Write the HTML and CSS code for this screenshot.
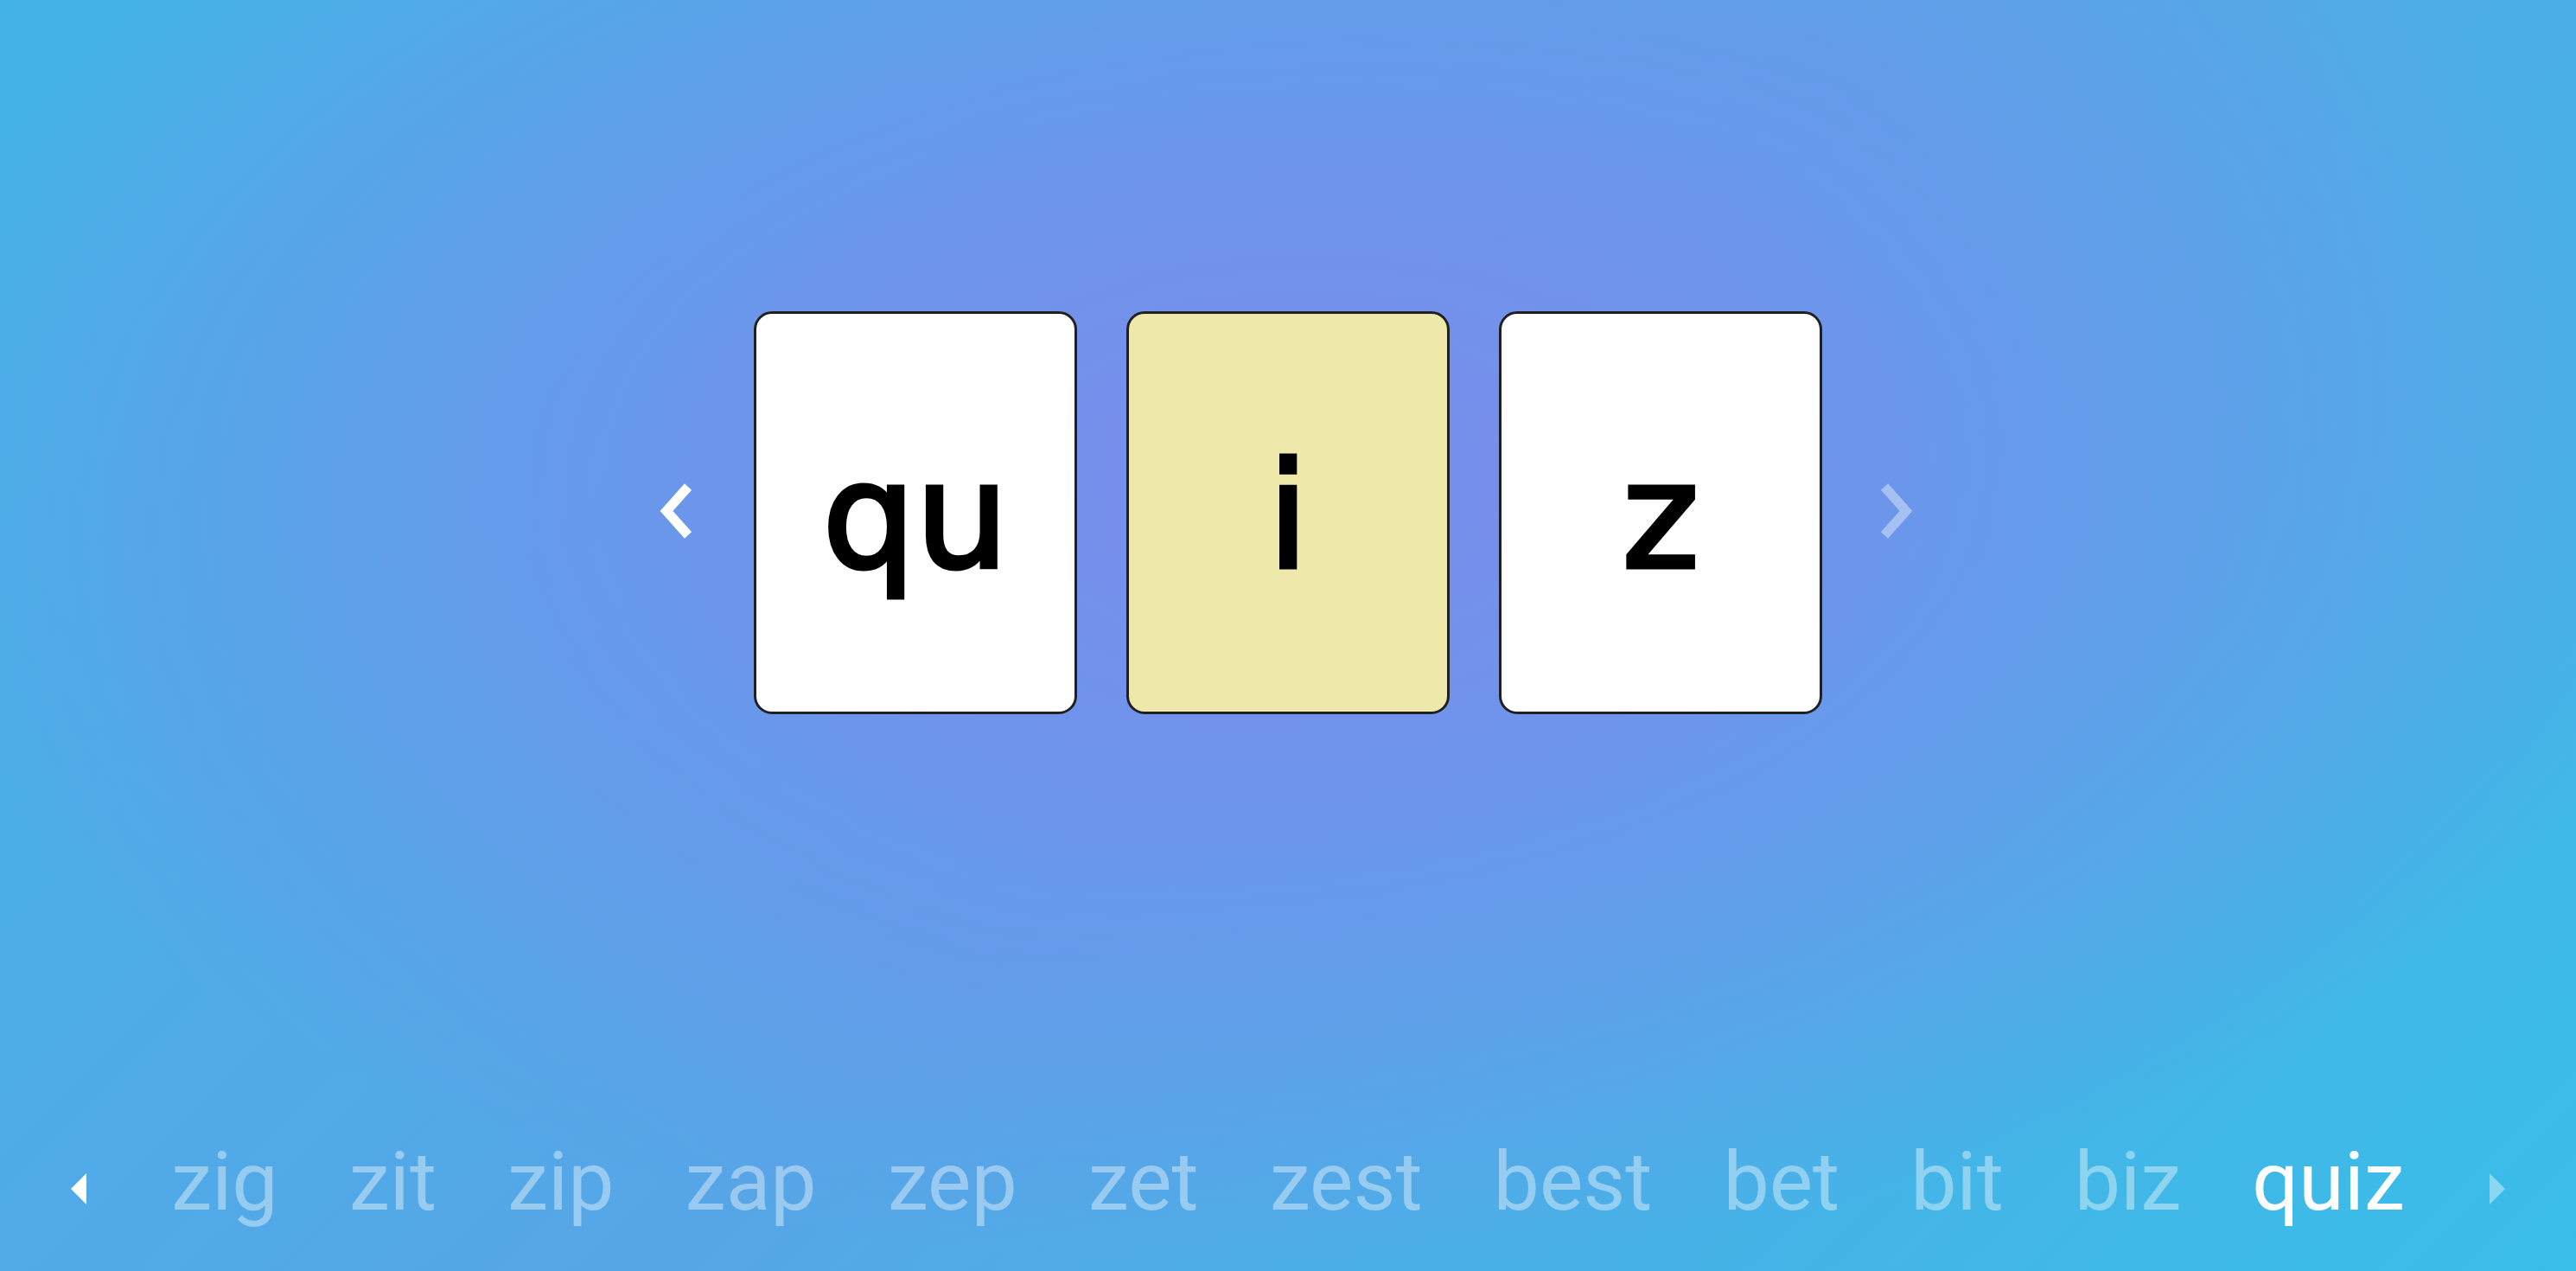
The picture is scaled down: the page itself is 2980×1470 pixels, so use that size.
FILE: index.html
```html
<!DOCTYPE html>
<html lang="en">
<head>
<meta charset="utf-8">
<title>Word builder</title>
<link rel="stylesheet" href="styles.css">
</head>
<body>
<main class="app">
  <section class="stage">
    <button class="nav nav--prev" aria-label="Previous">
      <svg viewBox="0 0 40 66" width="40" height="66"><polyline points="33,5 8,33 33,61"/></svg>
    </button>
    <div class="tiles">
      <div class="tile">qu</div>
      <div class="tile tile--active">i</div>
      <div class="tile">z</div>
    </div>
    <button class="nav nav--next nav--disabled" aria-label="Next">
      <svg viewBox="0 0 40 66" width="40" height="66"><polyline points="7,5 32,33 7,61"/></svg>
    </button>
  </section>
  <nav class="words">
    <button class="arrow arrow--prev" aria-label="Previous word">
      <svg viewBox="0 0 18 36" width="18" height="36"><polygon points="18,0 0,18 18,36"/></svg>
    </button>
    <span class="word">zig</span>
    <span class="word">zit</span>
    <span class="word">zip</span>
    <span class="word">zap</span>
    <span class="word">zep</span>
    <span class="word">zet</span>
    <span class="word">zest</span>
    <span class="word">best</span>
    <span class="word">bet</span>
    <span class="word">bit</span>
    <span class="word">biz</span>
    <span class="word word--current">quiz</span>
    <button class="arrow arrow--next arrow--disabled" aria-label="Next word">
      <svg viewBox="0 0 18 36" width="18" height="36"><polygon points="0,0 18,18 0,36"/></svg>
    </button>
  </nav>
</main>
</body>
</html>
```
FILE: styles.css
```css
* { box-sizing: border-box; }

html, body {
  margin: 0;
  height: 100%;
}

body {
  background:
    radial-gradient(ellipse 55% 62% at 50% 38%, rgba(122, 140, 236, 1) 0%, rgba(116, 144, 236, 0.8) 40%, rgba(100, 160, 235, 0) 100%),
    linear-gradient(135deg, #44b3e8 0%, #56a6e7 50%, #39bee8 100%);
  font-family: "Roboto", "Liberation Sans", sans-serif;
  overflow: hidden;
}

.app {
  display: flex;
  flex-direction: column;
  min-height: 100vh;
}

.stage {
  display: grid;
  grid-template-columns: 1fr auto 1fr;
  align-items: center;
  padding-top: 360px;
}

.nav {
  background: none;
  border: 0;
  padding: 0;
  display: flex;
  cursor: pointer;
}

.nav svg polyline {
  fill: none;
  stroke: #ffffff;
  stroke-width: 11;
  stroke-linejoin: miter;
  stroke-linecap: butt;
}

.nav--prev {
  justify-self: end;
  margin-right: 69px;
  margin-top: -4px;
}

.nav--next {
  justify-self: start;
  margin-left: 65px;
  margin-top: -4px;
}

.nav--disabled svg polyline {
  stroke: rgba(255, 255, 255, 0.4);
}

.tiles {
  display: flex;
  gap: 57px;
}

.tile {
  width: 374px;
  height: 466px;
  background: #ffffff;
  border: 3px solid #202020;
  border-radius: 21px;
  display: flex;
  align-items: center;
  justify-content: center;
  padding-top: 8px;
  font-family: "DejaVu Sans", "Lato", sans-serif;
  font-weight: 400;
  font-size: 170px;
  line-height: 1;
  color: #000000;
  -webkit-text-stroke: 5px #000000;
  paint-order: stroke fill;
}

.tile--active {
  background: #eee8aa;
}

.words {
  margin-top: auto;
  display: flex;
  justify-content: center;
  align-items: center;
  gap: 82px;
  padding-bottom: 48px;
  font-size: 95px;
  line-height: 111px;
}

.word {
  color: rgba(255, 255, 255, 0.4);
}

.word--current {
  color: #ffffff;
}

.arrow {
  background: none;
  border: 0;
  padding: 0;
  display: flex;
  margin-top: 16px;
  cursor: pointer;
}

.arrow--prev {
  margin-right: 16px;
}

.arrow--next {
  margin-left: 16px;
}

.arrow svg polygon {
  fill: #ffffff;
}

.arrow--disabled svg polygon {
  fill: rgba(255, 255, 255, 0.4);
}
```
